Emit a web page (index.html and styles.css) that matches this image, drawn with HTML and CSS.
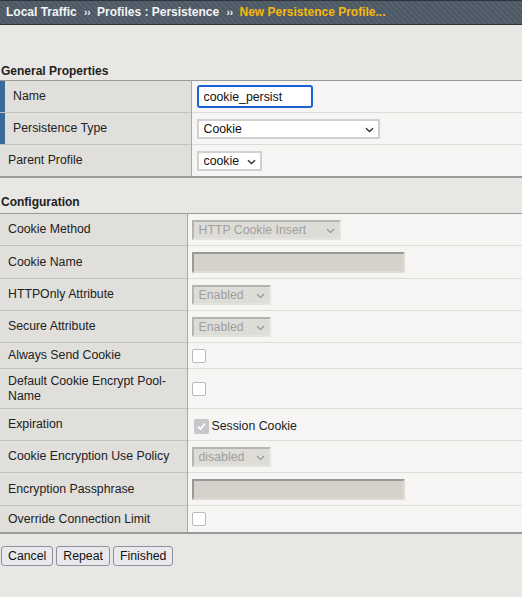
FILE: index.html
```html
<!DOCTYPE html>
<html lang="en">
  <head>
    <meta charset="UTF-8" />
    <meta name="viewport" content="width=device-width, initial-scale=1.0" />
    <title>New Persistence Profile</title>
    <link rel="stylesheet" href="styles.css">
  </head>
  <body>
    <!-- Breadcrumb -->
    <div class="crumbs">
      <span>Local Traffic</span>
      <span class="sep">››</span>
      <span>Profiles : Persistence</span>
      <span class="sep">››</span>
      <span class="current">New Persistence Profile...</span>
    </div>

    <div class="page">
      <!-- General Properties -->
      <div class="section first">
        <div class="section-title">General Properties</div>
        <table class="props general">
          <colgroup><col class="label-col" /><col /></colgroup>
          <tr>
            <td class="label required">Name</td>
            <td class="value"><input type="text" class="name-input" value="cookie_persist" /></td>
          </tr>
          <tr>
            <td class="label required">Persistence Type</td>
            <td class="value">
              <span class="select" style="width: 183px;">
                <select><option>Cookie</option></select>
                <svg class="chev" width="9" height="6" viewBox="0 0 9 6"><path d="M1 1.2 4.5 4.6 8 1.2" /></svg>
              </span>
            </td>
          </tr>
          <tr>
            <td class="label">Parent Profile</td>
            <td class="value">
              <span class="select" style="width: 65px;">
                <select><option>cookie</option></select>
                <svg class="chev" width="9" height="6" viewBox="0 0 9 6"><path d="M1 1.2 4.5 4.6 8 1.2" /></svg>
              </span>
            </td>
          </tr>
        </table>
      </div>

      <!-- Configuration -->
      <div class="section">
        <div class="section-title">Configuration</div>
        <table class="props config">
          <colgroup><col class="label-col" /><col /></colgroup>
          <tr>
            <td class="label">Cookie Method</td>
            <td class="value">
              <span class="select off" style="width: 149px;">
                <select disabled><option>HTTP Cookie Insert</option></select>
                <svg class="chev" width="9" height="6" viewBox="0 0 9 6"><path d="M1 1.2 4.5 4.6 8 1.2" /></svg>
              </span>
            </td>
          </tr>
          <tr class="input-row">
            <td class="label">Cookie Name</td>
            <td class="value"><input type="text" class="text-off" disabled /></td>
          </tr>
          <tr>
            <td class="label">HTTPOnly Attribute</td>
            <td class="value">
              <span class="select off" style="width: 79px;">
                <select disabled><option>Enabled</option></select>
                <svg class="chev" width="9" height="6" viewBox="0 0 9 6"><path d="M1 1.2 4.5 4.6 8 1.2" /></svg>
              </span>
            </td>
          </tr>
          <tr>
            <td class="label">Secure Attribute</td>
            <td class="value">
              <span class="select off" style="width: 79px;">
                <select disabled><option>Enabled</option></select>
                <svg class="chev" width="9" height="6" viewBox="0 0 9 6"><path d="M1 1.2 4.5 4.6 8 1.2" /></svg>
              </span>
            </td>
          </tr>
          <tr class="short">
            <td class="label">Always Send Cookie</td>
            <td class="value"><span class="check"></span></td>
          </tr>
          <tr class="tall">
            <td class="label">Default Cookie Encrypt Pool-Name</td>
            <td class="value"><span class="check"></span></td>
          </tr>
          <tr>
            <td class="label">Expiration</td>
            <td class="value">
              <label class="session">
                <span class="check checked">
                  <svg width="11" height="11" viewBox="0 0 11 11"><path d="M2 5.6 4.4 8 9 2.6" /></svg>
                </span>
                Session Cookie
              </label>
            </td>
          </tr>
          <tr>
            <td class="label">Cookie Encryption Use Policy</td>
            <td class="value">
              <span class="select off" style="width: 79px;">
                <select disabled><option>disabled</option></select>
                <svg class="chev" width="9" height="6" viewBox="0 0 9 6"><path d="M1 1.2 4.5 4.6 8 1.2" /></svg>
              </span>
            </td>
          </tr>
          <tr class="input-row">
            <td class="label">Encryption Passphrase</td>
            <td class="value"><input type="text" class="text-off" disabled /></td>
          </tr>
          <tr class="short last">
            <td class="label">Override Connection Limit</td>
            <td class="value"><span class="check"></span></td>
          </tr>
        </table>
      </div>

      <!-- Buttons -->
      <div class="buttons">
        <button>Cancel</button>
        <button>Repeat</button>
        <button>Finished</button>
      </div>
    </div>
  </body>
</html>
```

FILE: styles.css
```css
body {
  font-family: "Liberation Sans", Arial, sans-serif;
  font-size: 12.3px;
  margin: 0;
  padding: 0;
  background-color: #e8e7e3;
  color: #222;
}
.crumbs {
  height: 23px;
  line-height: 23px;
  padding-left: 6px;
  border-top: 1px solid #2e3339;
  border-bottom: 1px solid #2e3339;
  background: repeating-linear-gradient(45deg, #4d5865 0 2px, #56616e 2px 4px);
  color: #f4f4f4;
  font-weight: bold;
  font-size: 12px;
  white-space: nowrap;
}
.crumbs .sep {
  font-size: 10px;
  margin: 0 3px 0 4px;
}
.crumbs .current {
  color: #f6b90a;
}
.page {
  padding-top: 23px;
}
.section {
  margin-top: 17px;
}
.section.first {
  margin-top: 16px;
}
.section-title {
  font-weight: bold;
  font-size: 12px;
  line-height: 14px;
  padding: 0 0 4px 1px;
}
.first .section-title {
  padding-bottom: 2px;
}
.props {
  width: 100%;
  table-layout: fixed;
  border-collapse: collapse;
  border-top: 1px solid #9a9a9a;
  border-bottom: 2px solid #9a9a9a;
}
.general .label-col {
  width: 191px;
}
.config .label-col {
  width: 187px;
}
.props td {
  height: 31px;
  padding: 0;
  vertical-align: middle;
}
.props tr + tr td.label {
  border-top: 1px solid #c2c1bd;
}
.props tr + tr td.value {
  border-top: 1px solid #dddcd8;
}
.props tr.input-row td {
  height: 32px;
}
.props tr.short td {
  height: 25px;
}
.props tr.short.last td {
  height: 26px;
}
.props tr.tall td {
  height: 39px;
}
.label {
  background-color: #e0dfdb;
  border-right: 1px solid #a9a8a4;
  padding: 0 8px !important;
  line-height: 15px;
}
.label.required {
  box-shadow: inset 5px 0 0 #3a6a99;
  padding-left: 13px !important;
}
.value {
  background-color: #f6f5f3;
}
.general .value {
  padding-left: 5px !important;
}
.config .value {
  padding-left: 4px !important;
}
.name-input {
  box-sizing: border-box;
  width: 116px;
  height: 23px;
  padding: 0 5px;
  border: 2px solid #1b62d6;
  border-radius: 3px;
  font-family: inherit;
  font-size: 12.3px;
  color: #111;
  outline: none;
  display: block;
}

/* selects */
.select {
  position: relative;
  display: block;
  height: 20px;
}
.select select {
  appearance: none;
  box-sizing: border-box;
  width: 100%;
  height: 20px;
  margin: 0;
  padding: 0 0 0 5px;
  border: 2px solid #d0d0d0;
  border-radius: 0;
  background: #fff;
  font-family: inherit;
  font-size: 12.3px;
  color: #111;
}
.select .chev {
  position: absolute;
  right: 6px;
  top: 8px;
  fill: none;
  stroke: #333;
  stroke-width: 1.4;
}
.select.off select {
  border-color: #999 #dedcd7 #dedcd7 #999;
  background: #d5d2cb;
  color: #7a7a7a;
}
.select.off .chev {
  stroke: #8a8a8a;
  stroke-width: 1.1;
}
.text-off {
  box-sizing: border-box;
  display: block;
  width: 213px;
  height: 21px;
  margin: 0;
  border: 2px solid;
  border-color: #999 #dedcd7 #dedcd7 #999;
  background: #d5d2cb;
}

/* checkboxes */
.check {
  display: block;
  box-sizing: border-box;
  width: 14px;
  height: 14px;
  border: 1px solid #b9b9bd;
  border-radius: 2px;
  background: #fff;
}
.session {
  display: flex;
  align-items: center;
  gap: 3px;
  padding-left: 2px;
  margin-top: 3px;
}
.check.checked {
  width: 15px;
  height: 15px;
  border: none;
  background: #c8c8cc;
  display: flex;
  align-items: center;
  justify-content: center;
}
.check.checked svg {
  fill: none;
  stroke: #fff;
  stroke-width: 1.8;
}

/* buttons */
.buttons {
  display: flex;
  gap: 3px;
  margin-top: 12px;
  padding-left: 1px;
}
.buttons button {
  height: 20px;
  padding: 0 6px;
  border: 1px solid #8f8f9d;
  border-radius: 3px;
  background-color: #e9e9ed;
  font-family: inherit;
  font-size: 12.3px;
  color: #111;
  cursor: pointer;
}
.buttons button:hover {
  background-color: #d0d0d7;
}
```
